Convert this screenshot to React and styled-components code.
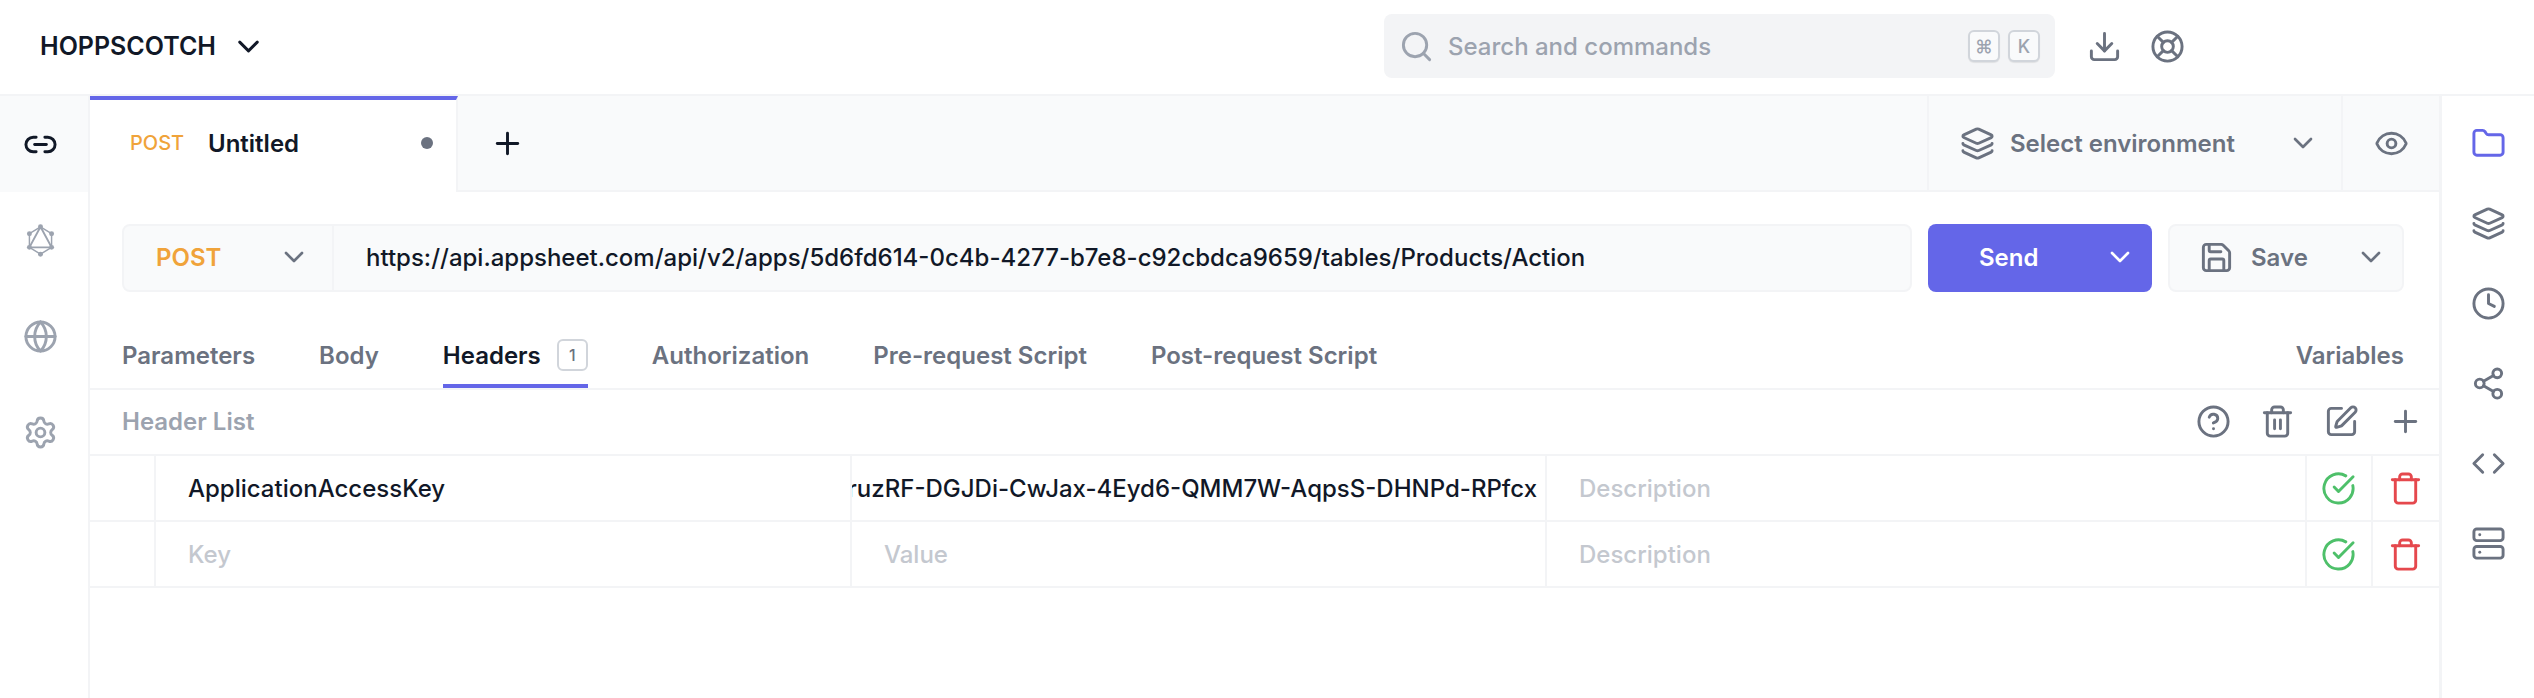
import React from 'react';
import styled, { createGlobalStyle } from 'styled-components';
import {
  ChevronDown, Search, Download, LifeBuoy, Link2, Globe, Settings, Plus, Layers, Eye, Save,
  Folder, Clock, Share2, Code, Server, CircleHelp, Trash2, SquarePen, CircleCheckBig, Trash,
} from 'lucide-react';

const accent = '#6466e8';

const GlobalStyle = createGlobalStyle`
  html, body { margin: 0; height: 100%; background: #fff; }
  body { font-family: Inter, 'Noto Sans', sans-serif; color: #111827; overflow: hidden; }
  #root { height: 100%; }
  * { box-sizing: border-box; }
`;

const Page = styled.div`
  display: flex;
  flex-direction: column;
  width: 2534px;
  height: 698px;
`;

const Header = styled.header`
  flex: 0 0 96px;
  display: flex;
  align-items: center;
  padding: 0 0 2px 40px;
  border-bottom: 2px solid #f3f4f6;
`;
const Brand = styled.div`
  display: flex;
  align-items: center;
  font-size: 25px;
  font-weight: 600;
  width: 1344px;
  gap: 15px;
`;
const SearchBox = styled.div`
  width: 671px;
  height: 64px;
  background: #f3f4f6;
  border-radius: 8px;
  display: flex;
  align-items: center;
  padding: 0 15px;
  gap: 14px;
  color: #9ca3af;
  font-size: 24px;
  font-weight: 500;
`;
const SearchText = styled.span`
  flex: 1;
`;
const KbdGroup = styled.div`
  display: flex;
  gap: 8px;
`;
const Kbd = styled.kbd`
  width: 32px;
  height: 32px;
  border: 2px solid #d1d5db;
  border-radius: 6px;
  background: #f9fafb;
  display: flex;
  align-items: center;
  justify-content: center;
  font-family: Inter, sans-serif;
  font-size: 18px;
  color: #9ca3af;
  box-shadow: 0 1px 1px rgba(0, 0, 0, 0.08);
`;
const HeaderIcons = styled.div`
  display: flex;
  align-items: center;
  gap: 28px;
  padding-left: 32px;
  color: #6b7280;
`;

const Body = styled.div`
  flex: 1;
  display: flex;
  min-height: 0;
`;

const LeftNav = styled.nav`
  flex: 0 0 90px;
  display: flex;
  flex-direction: column;
  border-right: 2px solid #f3f4f6;
`;
const NavItem = styled.div`
  height: 96px;
  display: flex;
  align-items: center;
  justify-content: center;
  color: ${p => (p.active ? '#111827' : '#9ca3af')};
  background: ${p => (p.active ? '#f9fafb' : 'transparent')};
  padding-right: 8px;
`;

const Main = styled.main`
  flex: 1;
  min-width: 0;
  display: flex;
  flex-direction: column;
`;

const TabBar = styled.div`
  flex: 0 0 96px;
  display: flex;
  background: #f9fafb;
`;
const Tab = styled.div`
  width: 368px;
  background: #fff;
  border-top: 4px solid ${accent};
  border-right: 2px solid #f3f4f6;
  display: flex;
  align-items: center;
  padding: 0 23px 6px 40px;
  font-size: 24px;
  font-weight: 600;
`;
const TabMethod = styled.span`
  font-size: 20px;
  font-weight: 500;
  color: #f0a33a;
  width: 78px;
`;
const TabTitle = styled.span`
  flex: 1;
`;
const Dot = styled.span`
  width: 12px;
  height: 12px;
  border-radius: 50%;
  background: #6b7280;
`;
const AddTab = styled.div`
  flex: 1;
  display: flex;
  align-items: center;
  padding: 0 0 0 32px;
  color: #111827;
  border-bottom: 2px solid #f3f4f6;
`;
const EnvSelect = styled.div`
  width: 416px;
  display: flex;
  align-items: center;
  padding: 0 22px 0 31px;
  gap: 15px;
  border-left: 2px solid #f3f4f6;
  border-right: 2px solid #f3f4f6;
  border-bottom: 2px solid #f3f4f6;
  font-size: 24px;
  font-weight: 600;
  color: #6b7280;
`;
const EnvLabel = styled.span`
  flex: 1;
`;
const EyeButton = styled.div`
  flex: 0 0 96px;
  display: flex;
  align-items: center;
  justify-content: center;
  color: #6b7280;
  border-bottom: 2px solid #f3f4f6;
`;

const UrlRow = styled.div`
  display: flex;
  align-items: stretch;
  height: 68px;
  margin: 32px 35px 0 32px;
  gap: 16px;
`;
const UrlField = styled.div`
  flex: 1;
  min-width: 0;
  display: flex;
  background: #f9fafb;
  border: 2px solid #f3f4f6;
  border-radius: 8px;
`;
const MethodSelect = styled.div`
  flex: 0 0 210px;
  display: flex;
  align-items: center;
  justify-content: space-between;
  padding: 0 22px 2px 32px;
  border-right: 2px solid #f3f4f6;
  color: #f0a33a;
  font-size: 24px;
  font-weight: 600;
`;
const UrlText = styled.div`
  display: flex;
  align-items: center;
  padding: 0 0 2px 32px;
  font-size: 24px;
  font-weight: 500;
  white-space: nowrap;
`;
const SendButton = styled.div`
  flex: 0 0 224px;
  display: flex;
  align-items: center;
  justify-content: space-between;
  padding: 0 16px 2px 51px;
  border-radius: 8px;
  background: ${accent};
  color: #fff;
  font-size: 24px;
  font-weight: 600;
`;
const SaveButton = styled.div`
  flex: 0 0 236px;
  display: flex;
  align-items: center;
  gap: 17px;
  padding: 0 15px 2px 29px;
  background: #f9fafb;
  border: 2px solid #f3f4f6;
  border-radius: 8px;
  color: #6b7280;
  font-size: 24px;
  font-weight: 600;
`;
const SaveLabel = styled.span`
  flex: 1;
`;

const RequestTabs = styled.div`
  display: flex;
  align-items: flex-start;
  height: 98px;
  padding: 0 35px 0 32px;
  gap: 64px;
  border-bottom: 2px solid #f3f4f6;
`;
const RequestTab = styled.div`
  display: flex;
  align-items: center;
  gap: 16px;
  padding-top: 34px;
  height: 96px;
  font-size: 24px;
  font-weight: 600;
  color: ${p => (p.active ? '#111827' : '#6b7280')};
  border-bottom: 4px solid ${p => (p.active ? accent : 'transparent')};
  margin-left: ${p => (p.push ? 'auto' : '0')};
`;
const Badge = styled.span`
  width: 31px;
  height: 32px;
  border: 2px solid #d1d5db;
  border-radius: 6px;
  display: flex;
  align-items: center;
  justify-content: center;
  font-size: 16px;
  font-weight: 500;
  color: #6b7280;
`;

const ListHead = styled.div`
  height: 66px;
  display: flex;
  align-items: center;
  padding: 0 16px 2px 32px;
  border-bottom: 2px solid #f3f4f6;
  font-size: 24px;
  font-weight: 600;
  color: #9ca3af;
`;
const ListTitle = styled.span`
  flex: 1;
`;
const ListActions = styled.div`
  display: flex;
  align-items: center;
  gap: 29px;
  color: #6b7280;
`;

const Row = styled.div`
  height: 66px;
  display: flex;
  border-bottom: 2px solid #f3f4f6;
`;
const Grip = styled.div`
  flex: 0 0 66px;
  border-right: 2px solid #f3f4f6;
`;
const Cell = styled.div`
  flex: 0 0 ${p => p.width}px;
  min-width: 0;
  display: flex;
  align-items: center;
  justify-content: ${p => (p.end ? 'flex-end' : 'flex-start')};
  overflow: hidden;
  white-space: nowrap;
  padding: ${p => (p.end ? '0 8px 0 0' : '0 32px')};
  border-right: 2px solid #f3f4f6;
  font-size: 24px;
  font-weight: 500;
  color: ${p => (p.muted ? '#c4c8cf' : '#111827')};
`;
const IconCell = styled.div`
  flex: 0 0 66px;
  display: flex;
  align-items: center;
  justify-content: center;
  padding-right: 2px;
  color: ${p => p.color};
  border-right: ${p => (p.last ? 'none' : '2px solid #f3f4f6')};
`;

const RightNav = styled.aside`
  flex: 0 0 95px;
  display: flex;
  flex-direction: column;
  border-left: 3px solid #f3f4f6;
`;
const RightItem = styled.div`
  height: 80px;
  display: flex;
  align-items: center;
  justify-content: center;
  color: ${p => (p.active ? accent : '#6b7280')};
  &:first-child { margin-top: 7px; }
`;

const GraphqlIcon = () => (
  <svg width="35" height="35" viewBox="0 0 24 24" fill="none" stroke="currentColor" strokeWidth="1">
    <path d="M12 2.6 19.6 7.3v9.4L12 21.4 4.4 16.7V7.3Z" />
    <path d="M12 2.6 19.6 16.7H4.4Z" strokeWidth="1.3" />
    <g fill="currentColor" stroke="none">
      <circle cx="12" cy="2.6" r="1.7" />
      <circle cx="19.6" cy="7.3" r="1.7" />
      <circle cx="19.6" cy="16.7" r="1.7" />
      <circle cx="12" cy="21.4" r="1.7" />
      <circle cx="4.4" cy="16.7" r="1.7" />
      <circle cx="4.4" cy="7.3" r="1.7" />
    </g>
  </svg>
);

const RequestTabList = ['Parameters', 'Body', 'Headers', 'Authorization', 'Pre-request Script', 'Post-request Script'];

const HeaderRow = ({ name, value, description, filled }) => (
  <Row>
    <Grip />
    <Cell width={696} muted={!filled}>{name}</Cell>
    <Cell width={695} muted={!filled} end={filled}>{value}</Cell>
    <Cell width={760} muted>{description}</Cell>
    <IconCell color="#4ec06a"><CircleCheckBig size={35} /></IconCell>
    <IconCell color="#e5484d" last><Trash size={35} /></IconCell>
  </Row>
);

export default function App() {
  return (
    <Page>
      <GlobalStyle />
      <Header>
        <Brand>HOPPSCOTCH <ChevronDown size={35} /></Brand>
        <SearchBox>
          <Search size={35} />
          <SearchText>Search and commands</SearchText>
          <KbdGroup>
            <Kbd>⌘</Kbd>
            <Kbd>K</Kbd>
          </KbdGroup>
        </SearchBox>
        <HeaderIcons>
          <Download size={35} />
          <LifeBuoy size={35} />
        </HeaderIcons>
      </Header>
      <Body>
        <LeftNav>
          <NavItem active><Link2 size={35} /></NavItem>
          <NavItem><GraphqlIcon /></NavItem>
          <NavItem><Globe size={35} /></NavItem>
          <NavItem><Settings size={35} /></NavItem>
        </LeftNav>
        <Main>
          <TabBar>
            <Tab>
              <TabMethod>POST</TabMethod>
              <TabTitle>Untitled</TabTitle>
              <Dot />
            </Tab>
            <AddTab><Plus size={35} /></AddTab>
            <EnvSelect>
              <Layers size={35} />
              <EnvLabel>Select environment</EnvLabel>
              <ChevronDown size={32} />
            </EnvSelect>
            <EyeButton><Eye size={35} /></EyeButton>
          </TabBar>
          <UrlRow>
            <UrlField>
              <MethodSelect>POST <ChevronDown size={32} color="#6b7280" /></MethodSelect>
              <UrlText>https://api.appsheet.com/api/v2/apps/5d6fd614-0c4b-4277-b7e8-c92cbdca9659/tables/Products/Action</UrlText>
            </UrlField>
            <SendButton>Send <ChevronDown size={32} /></SendButton>
            <SaveButton>
              <Save size={35} />
              <SaveLabel>Save</SaveLabel>
              <ChevronDown size={32} />
            </SaveButton>
          </UrlRow>
          <RequestTabs>
            {RequestTabList.map(name => (
              <RequestTab key={name} active={name === 'Headers'}>
                {name}
                {name === 'Headers' && <Badge>1</Badge>}
              </RequestTab>
            ))}
            <RequestTab push>Variables</RequestTab>
          </RequestTabs>
          <ListHead>
            <ListTitle>Header List</ListTitle>
            <ListActions>
              <CircleHelp size={35} />
              <Trash2 size={35} />
              <SquarePen size={35} />
              <Plus size={35} />
            </ListActions>
          </ListHead>
          <HeaderRow
            filled
            name="ApplicationAccessKey"
            value="V2-ruzRF-DGJDi-CwJax-4Eyd6-QMM7W-AqpsS-DHNPd-RPfcx"
            description="Description"
          />
          <HeaderRow name="Key" value="Value" description="Description" />
        </Main>
        <RightNav>
          <RightItem active><Folder size={35} /></RightItem>
          <RightItem><Layers size={35} /></RightItem>
          <RightItem><Clock size={35} /></RightItem>
          <RightItem><Share2 size={35} /></RightItem>
          <RightItem><Code size={35} /></RightItem>
          <RightItem><Server size={35} /></RightItem>
        </RightNav>
      </Body>
    </Page>
  );
}
